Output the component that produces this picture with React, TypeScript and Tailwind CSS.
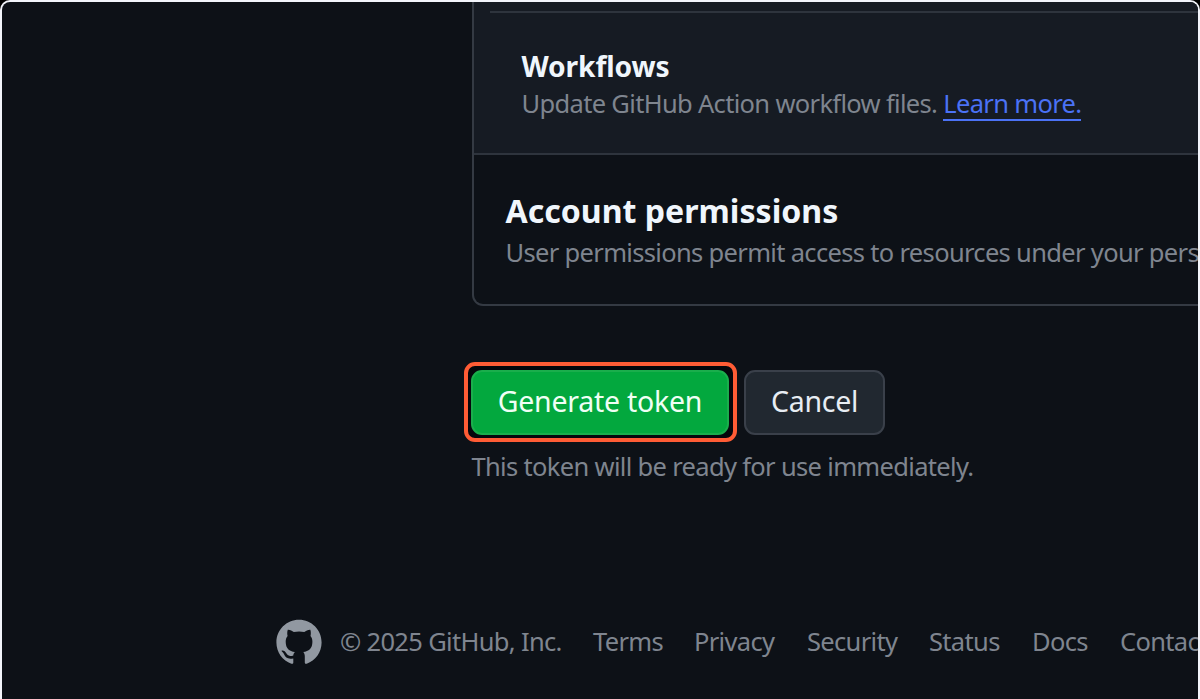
import type { ReactNode } from "react";

function Muted({ className = "", children }: { className?: string; children: ReactNode }) {
  return (
    <p className={`h-8 whitespace-nowrap text-[25.5px] leading-8 tracking-[-0.67px] text-[#7f858f] ${className}`}>{children}</p>
  );
}

function GitHubMark() {
  return (
    <svg viewBox="2 2 46 46" className="size-[46px] shrink-0 fill-[#9198a1]" aria-hidden="true">
      <path d="M25 2.8C12.5 2.8 2.4 12.9 2.4 25.4c0 9.8 6.2 18.1 15 21.3 1.4.4 1.9-.4 1.9-1.2v-4.1c-5.6 1.1-7.8-.8-9-3.6-.6-1.4-1.3-2.4-2.4-3.2-.6-.6-.2-1.1.6-1 1.7.1 2.9 1.2 3.8 2.7 1.7 2.8 4.2 3.1 7 2.1.2-1.5.7-2.6 1.6-3.4-5.5-.7-9.2-3.5-9.2-10.3 0-2.5.6-4.3 1.9-5.7-.5-1.9-.5-4.2.2-6.3 2.2-.2 4.2 1 6 2.3 3.3-.8 7.2-.8 10.5 0 1.8-1.3 3.8-2.5 6-2.3.7 2.1.7 4.4.2 6.3 1.3 1.4 1.9 3.2 1.9 5.7 0 6.8-3.7 9.6-9.2 10.3 1.1 1 1.6 2.5 1.6 4.5v6c0 .8.5 1.6 1.9 1.2 8.7-3.2 14.9-11.5 14.9-21.3C47.6 12.9 37.5 2.8 25 2.8Z" />
    </svg>
  );
}

const links = [
  { label: "Terms", width: "w-[101px]" },
  { label: "Privacy", width: "w-[113px]" },
  { label: "Security", width: "w-[122px]" },
  { label: "Status", width: "w-[103px]" },
  { label: "Docs", width: "w-[88px]" },
  { label: "Contact", width: "w-[100px]" },
];

export default function App() {
  return (
    <div className="h-[699px] w-[1200px] overflow-hidden bg-black font-['Noto_Sans',sans-serif]">
      <div className="flex h-full flex-col overflow-hidden rounded-t-[10px] border-2 border-b-0 border-[#f3f5fb] bg-[#0d1117]">
        <section className="ml-[469.5px] h-[304px] w-[900px] shrink-0 overflow-hidden rounded-bl-[11px] border-2 border-t-0 border-[#343a43]">
          <div className="h-[153px] border-b-2 border-[#2e343d] bg-[#161b23] pt-[9px]">
            <div className="ml-4 border-t-2 border-[#2e343d] pt-[35px] pl-8">
              <h3 className="h-[36px] text-[28.2px] leading-[36px] font-bold tracking-[-0.1px] text-[#f0f6fc]">Workflows</h3>
              <Muted className="mt-[2.5px]">
                Update GitHub Action workflow files.{" "}
                <a href="#" className="inline-block h-[34px] border-b-[2.5px] border-[#4b72f5] text-[#4b72f5]">Learn more.</a>
              </Muted>
            </div>
          </div>
          <div className="pt-[34px] pl-8">
            <h2 className="h-[44px] text-[32.1px] leading-[44px] font-bold text-[#f0f6fc]">Account permissions</h2>
            <Muted className="mt-[2.5px]">User permissions permit access to resources under your personal account.</Muted>
          </div>
        </section>

        <div className="mt-[56px] ml-[462px] flex h-[80px] shrink-0 items-center gap-[7px]">
          <div className="flex h-[80px] w-[273px] items-center rounded-[11px] border-4 border-[#ff5c35] bg-[#05070c] pl-[3px]">
            <button className="h-[65px] w-[258px] rounded-[11px] border-2 border-[#1aae4c] bg-[#03a83e] pb-[3px] text-[28.5px] leading-9 tracking-[-0.25px] text-[#f0fff5]">Generate token</button>
          </div>
          <button className="h-[65px] w-[141px] rounded-[11px] border-2 border-[#3a404a] bg-[#212830] pb-[3px] text-[28.5px] leading-9 tracking-[-0.25px] text-[#e8edf3]">Cancel</button>
        </div>
        <Muted className="mt-[8px] ml-[469.5px] shrink-0">This token will be ready for use immediately.</Muted>

        <footer className="mt-[136px] ml-[274px] flex h-[46px] w-[1100px] shrink-0 items-center">
          <div className="pt-[2px]">
            <GitHubMark />
          </div>
          <Muted className="ml-[18px] w-[253px] shrink-0">© 2025 GitHub, Inc.</Muted>
          <nav className="flex">
            {links.map((link) => (
              <a key={link.label} href="#" className={`shrink-0 ${link.width}`}>
                <Muted>{link.label}</Muted>
              </a>
            ))}
          </nav>
        </footer>
      </div>
    </div>
  );
}
